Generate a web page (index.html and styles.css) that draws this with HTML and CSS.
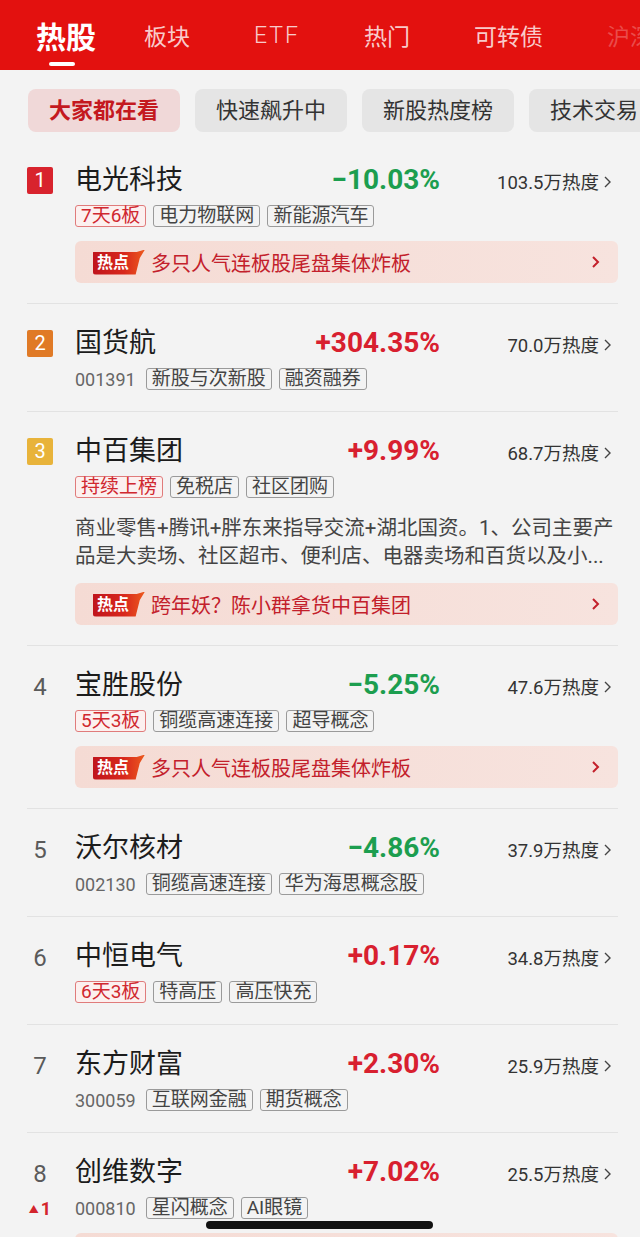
FILE: index.html
```html
<!DOCTYPE html>
<html lang="zh-CN">
<head>
  <meta charset="UTF-8" />
  <meta name="viewport" content="width=device-width, initial-scale=1.0" />
  <title>热股榜</title>
  <link rel="stylesheet" href="styles.css">
</head>
<body>
  <header class="topbar">
    <nav class="tabs">
      <span class="tab active">热股</span>
      <span class="tab">板块</span>
      <span class="tab etf">ETF</span>
      <span class="tab">热门</span>
      <span class="tab">可转债</span>
      <span class="tab faded">沪深</span>
    </nav>
  </header>

  <div class="chips">
    <span class="chip on">大家都在看</span>
    <span class="chip">快速飙升中</span>
    <span class="chip">新股热度榜</span>
    <span class="chip">技术交易</span>
  </div>

  <ul class="list">
    <li class="row">
      <span class="rank badge r1">1</span>
      <div class="title"><span class="name">电光科技</span><span class="chg down">−10.03%</span><span class="heat">103.5万热度<svg class="more" viewBox="0 0 9 14"><polyline points="2,2 7,7 2,12"/></svg></span></div>
      <div class="meta"><span class="tag red">7天6板</span><span class="tag">电力物联网</span><span class="tag">新能源汽车</span></div>
      <div class="hot"><span class="hot-tag">热点</span><span class="hot-text">多只人气连板股尾盘集体炸板</span><svg class="go" viewBox="0 0 9 14"><polyline points="2,2 7,7 2,12"/></svg></div>
    </li>
    <li class="row">
      <span class="rank badge r2">2</span>
      <div class="title"><span class="name">国货航</span><span class="chg up">+304.35%</span><span class="heat">70.0万热度<svg class="more" viewBox="0 0 9 14"><polyline points="2,2 7,7 2,12"/></svg></span></div>
      <div class="meta"><span class="code">001391</span><span class="tag">新股与次新股</span><span class="tag">融资融券</span></div>
    </li>
    <li class="row">
      <span class="rank badge r3">3</span>
      <div class="title"><span class="name">中百集团</span><span class="chg up">+9.99%</span><span class="heat">68.7万热度<svg class="more" viewBox="0 0 9 14"><polyline points="2,2 7,7 2,12"/></svg></span></div>
      <div class="meta"><span class="tag red">持续上榜</span><span class="tag">免税店</span><span class="tag">社区团购</span></div>
      <p class="desc">商业零售+腾讯+胖东来指导交流+湖北国资。1、公司主要产品是大卖场、社区超市、便利店、电器卖场和百货以及小...</p>
      <div class="hot"><span class="hot-tag">热点</span><span class="hot-text">跨年妖？陈小群拿货中百集团</span><svg class="go" viewBox="0 0 9 14"><polyline points="2,2 7,7 2,12"/></svg></div>
    </li>
    <li class="row">
      <span class="rank">4</span>
      <div class="title"><span class="name">宝胜股份</span><span class="chg down">−5.25%</span><span class="heat">47.6万热度<svg class="more" viewBox="0 0 9 14"><polyline points="2,2 7,7 2,12"/></svg></span></div>
      <div class="meta"><span class="tag red">5天3板</span><span class="tag">铜缆高速连接</span><span class="tag">超导概念</span></div>
      <div class="hot"><span class="hot-tag">热点</span><span class="hot-text">多只人气连板股尾盘集体炸板</span><svg class="go" viewBox="0 0 9 14"><polyline points="2,2 7,7 2,12"/></svg></div>
    </li>
    <li class="row">
      <span class="rank">5</span>
      <div class="title"><span class="name">沃尔核材</span><span class="chg down">−4.86%</span><span class="heat">37.9万热度<svg class="more" viewBox="0 0 9 14"><polyline points="2,2 7,7 2,12"/></svg></span></div>
      <div class="meta"><span class="code">002130</span><span class="tag">铜缆高速连接</span><span class="tag">华为海思概念股</span></div>
    </li>
    <li class="row">
      <span class="rank">6</span>
      <div class="title"><span class="name">中恒电气</span><span class="chg up">+0.17%</span><span class="heat">34.8万热度<svg class="more" viewBox="0 0 9 14"><polyline points="2,2 7,7 2,12"/></svg></span></div>
      <div class="meta"><span class="tag red">6天3板</span><span class="tag">特高压</span><span class="tag">高压快充</span></div>
    </li>
    <li class="row">
      <span class="rank">7</span>
      <div class="title"><span class="name">东方财富</span><span class="chg up">+2.30%</span><span class="heat">25.9万热度<svg class="more" viewBox="0 0 9 14"><polyline points="2,2 7,7 2,12"/></svg></span></div>
      <div class="meta"><span class="code">300059</span><span class="tag">互联网金融</span><span class="tag">期货概念</span></div>
    </li>
    <li class="row">
      <span class="rank">8</span>
      <span class="rise"><small>▲</small>1</span>
      <div class="title"><span class="name">创维数字</span><span class="chg up">+7.02%</span><span class="heat">25.5万热度<svg class="more" viewBox="0 0 9 14"><polyline points="2,2 7,7 2,12"/></svg></span></div>
      <div class="meta"><span class="code">000810</span><span class="tag">星闪概念</span><span class="tag">AI眼镜</span></div>
      <div class="hot"><span class="hot-tag">热点</span><span class="hot-text">星闪概念股午后走强</span><svg class="go" viewBox="0 0 9 14"><polyline points="2,2 7,7 2,12"/></svg></div>
    </li>
  </ul>

  <div class="home-bar"></div>
</body>
</html>
```

FILE: styles.css
```css
body {
  margin: 0;
  background: #f3f3f3;
  font-family: Roboto, "Noto Sans CJK SC", sans-serif;
  color: #1c1c1c;
  overflow: hidden;
}
.topbar {
  background: #e3110f;
  height: 70px;
  overflow: hidden;
}
.tabs {
  display: flex;
  align-items: center;
  gap: 64px;
  height: 70px;
  padding-left: 36px;
  white-space: nowrap;
}
.tab {
  font-size: 23px;
  color: rgba(255, 255, 255, 0.8);
}
.tab.etf {
  letter-spacing: 2px;
  font-weight: 300;
}
.tab.active {
  position: relative;
  margin-right: -16px;
  font-size: 30px;
  font-weight: bold;
  color: #fff;
}
.tab.active::after {
  content: "";
  position: absolute;
  left: 13px;
  bottom: -9px;
  width: 26px;
  height: 4px;
  border-radius: 2px;
  background: #fff;
}
.tab.faded {
  color: rgba(255, 255, 255, 0.25);
}
.chips {
  display: flex;
  gap: 15px;
  padding: 19px 0 9px 28px;
  overflow: hidden;
  white-space: nowrap;
}
.chip {
  flex: none;
  height: 43px;
  line-height: 43px;
  padding: 0 21px;
  border-radius: 8px;
  background: #e5e5e5;
  color: #333;
  font-size: 22px;
}
.chip.on {
  background: #f0d8d8;
  color: #c4191f;
  font-weight: bold;
}
.list {
  list-style: none;
  margin: 0;
  padding: 0 22px 0 27px;
}
.row {
  display: grid;
  grid-template-columns: 48px 1fr;
  padding: 22px 0 20px;
  border-bottom: 1px solid #e2e2e2;
}
.rank {
  grid-column: 1;
  grid-row: 1;
  align-self: center;
  width: 26px;
  text-align: center;
  font-size: 24px;
  color: #5a5a5a;
  margin-top: 4px;
}
.rank.badge {
  height: 27px;
  line-height: 27px;
  margin-top: 0;
  border-radius: 2px;
  color: #fff;
  font-size: 20px;
}
.r1 { background: #d8232d; }
.r2 { background: #e07a26; }
.r3 { background: #e8b33a; }
.rise {
  grid-column: 1;
  grid-row: 2;
  align-self: center;
  width: 26px;
  margin-top: 7px;
  text-align: center;
  color: #d3252c;
  font-size: 18px;
  font-weight: bold;
}
.rise small {
  font-size: 10px;
  margin-right: 2px;
  vertical-align: 2px;
}
.title, .meta, .desc, .hot {
  grid-column: 2;
}
.title {
  display: flex;
  align-items: baseline;
  height: 34px;
  line-height: 34px;
  white-space: nowrap;
}
.name {
  font-size: 27px;
}
.chg {
  margin-left: auto;
  font-size: 28px;
  font-weight: bold;
}
.chg.up { color: #d8202f; }
.chg.down { color: #1c9e4f; }
.heat {
  width: 172px;
  padding-right: 6px;
  text-align: right;
  font-size: 18.5px;
  color: #333;
}
.more {
  width: 9px;
  height: 14px;
  margin-left: 4px;
  fill: none;
  stroke: #444;
  stroke-width: 1.4;
}
.meta {
  display: flex;
  align-items: center;
  gap: 7px;
  height: 24px;
  margin-top: 7px;
  white-space: nowrap;
}
.code {
  font-size: 18px;
  color: #666;
  margin-right: 3px;
}
.tag {
  height: 20px;
  line-height: 20px;
  padding: 0 5px;
  border: 1px solid #9a9a9a;
  border-radius: 3px;
  font-size: 19px;
  color: #444;
}
.tag.red {
  border-color: #e07b7b;
  background: #fcf0ef;
  color: #d0282f;
}
.desc {
  margin: 15px 0 0;
  font-size: 20.5px;
  line-height: 28px;
  color: #444;
}
.hot {
  display: flex;
  align-items: center;
  height: 42px;
  margin-top: 13px;
  padding: 0 18px;
  border-radius: 6px;
  background: linear-gradient(90deg, #f5dbd4, #f7e3de);
}
.hot-tag {
  width: 52px;
  height: 25px;
  line-height: 26px;
  padding-left: 4px;
  box-sizing: border-box;
  font-size: 16px;
  font-weight: bold;
  color: #fff;
  background: linear-gradient(90deg, #c0141c, #d8281c 60%, #ec5a1e);
  clip-path: polygon(0 10%, 84% 10%, 100% 0, 90% 34%, 82% 100%, 0 100%);
  border-radius: 3px 0 0 3px;
}
.hot-text {
  flex: 1;
  margin-left: 6px;
  font-size: 20px;
  color: #c3202b;
}
.go {
  width: 9px;
  height: 14px;
  fill: none;
  stroke: #c3202b;
  stroke-width: 2;
}
.home-bar {
  position: fixed;
  left: 206px;
  bottom: 8px;
  width: 227px;
  height: 8px;
  border-radius: 4px;
  background: #111;
}
```
